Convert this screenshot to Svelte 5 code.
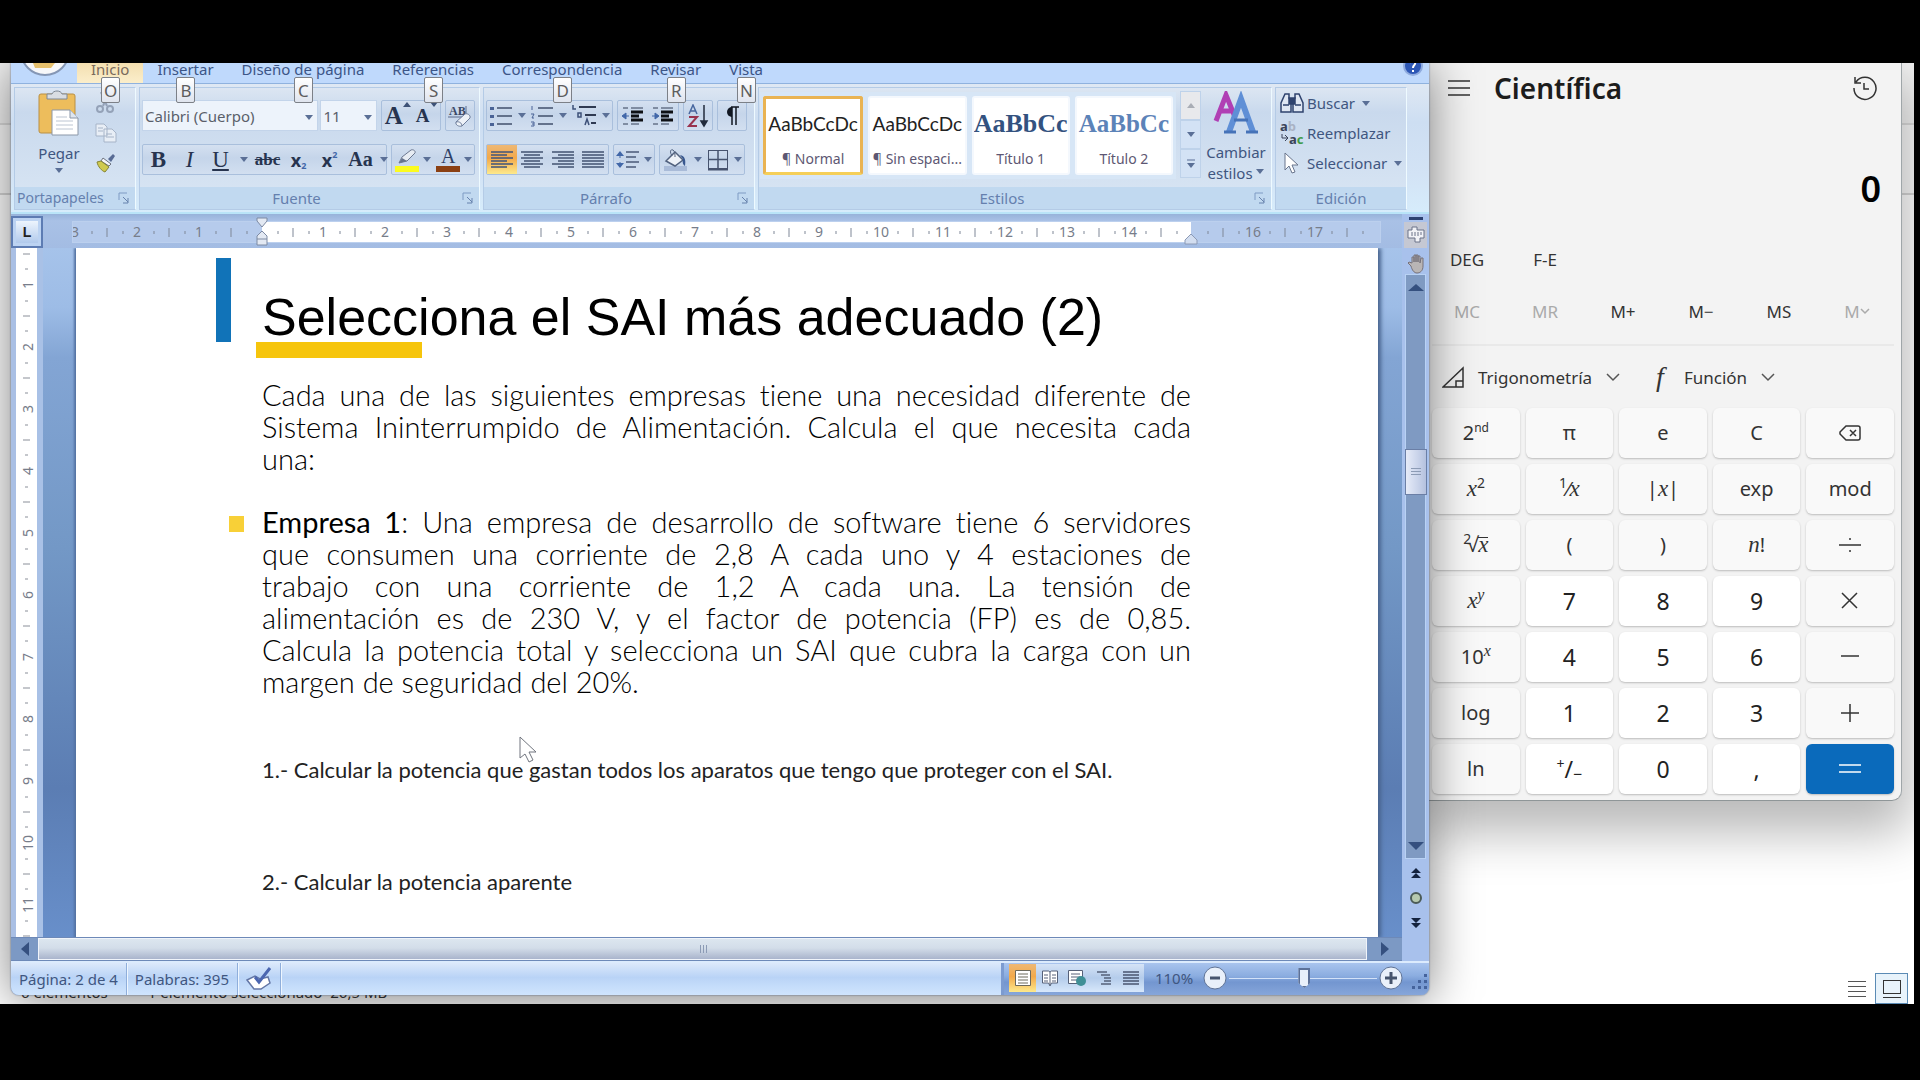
<script>
    let zoom = $state(51);
    let font = $state("Calibri (Cuerpo)");
    let size = $state("11");

    const tabs = [
        {name: "Inicio", key: "O", active: true},
        {name: "Insertar", key: "B"},
        {name: "Diseño de página", key: "C"},
        {name: "Referencias", key: "S"},
        {name: "Correspondencia", key: "D"},
        {name: "Revisar", key: "R"},
        {name: "Vista", key: "N"}
    ];

    const styles = [
        {name: "¶ Normal", sample: "AaBbCcDc", kind: "plain", active: true},
        {name: "¶ Sin espaci...", sample: "AaBbCcDc", kind: "plain"},
        {name: "Título 1", sample: "AaBbCc", kind: "title1"},
        {name: "Título 2", sample: "AaBbCc", kind: "title2"}
    ];

    const unit = 62;
    const hMarks = Array.from({length: 21}, (_, i)=>i - 3);
    const vMarks = Array.from({length: 16}, (_, i)=>i);

    const intro = [
        "Cada una de las siguientes empresas tiene una necesidad diferente de",
        "Sistema Ininterrumpido de Alimentación. Calcula el que necesita cada",
        "una:"
    ];

    const company = [
        "que consumen una corriente de 2,8 A cada uno y 4 estaciones de",
        "trabajo con una corriente de 1,2 A cada una. La tensión de",
        "alimentación es de 230 V, y el factor de potencia (FP) es de 0,85.",
        "Calcula la potencia total y selecciona un SAI que cubra la carga con un",
        "margen de seguridad del 20%."
    ];

    const memory = [
        {label: "MC", off: true},
        {label: "MR", off: true},
        {label: "M+"},
        {label: "M−"},
        {label: "MS"},
        {label: "M", off: true, menu: true}
    ];

    const keys = [
        {label: "2<sup>nd</sup>"},
        {label: "π"},
        {label: "e"},
        {label: "C"},
        {name: "Retroceso", path: "M8 5h12a2 2 0 0 1 2 2v10a2 2 0 0 1-2 2H8l-6-6v-2zM12 9l6 6M18 9l-6 6"},
        {label: "<i>x</i><sup class='big'>2</sup>"},
        {label: "<sup class='big'>1</sup>⁄<i>x</i>"},
        {label: "|<i>x</i>|"},
        {label: "exp"},
        {label: "mod"},
        {label: "<sup class='big root'>2</sup>√<i class='over'>x</i>"},
        {label: "("},
        {label: ")"},
        {label: "<i>n</i>!"},
        {name: "Dividir", path: "M1 12h22M12 5v2M12 17v2"},
        {label: "<i>x</i><sup class='big'><i>y</i></sup>"},
        {label: "7", digit: true},
        {label: "8", digit: true},
        {label: "9", digit: true},
        {name: "Multiplicar", path: "M4 4l15 15M19 4L4 19"},
        {label: "10<sup><i>x</i></sup>"},
        {label: "4", digit: true},
        {label: "5", digit: true},
        {label: "6", digit: true},
        {name: "Restar", path: "M3 11h18"},
        {label: "log"},
        {label: "1", digit: true},
        {label: "2", digit: true},
        {label: "3", digit: true},
        {name: "Sumar", path: "M3 12h18M12 3v18"},
        {label: "ln"},
        {label: "<sup class='big'>+</sup>/<sub>−</sub>", digit: true},
        {label: "0", digit: true},
        {label: ",", digit: true},
        {name: "Igual", path: "M1 8h22M1 15h22", equals: true}
    ];
</script>

{#snippet caret()}
    <svg class="caret" width="8" height="5" viewBox="0 0 8 5"><path d="M0 0h8L4 5z" fill="#5a6f96"/></svg>
{/snippet}

{#snippet launcher()}
    <svg class="launcher" width="12" height="12" viewBox="0 0 12 12" fill="none" stroke="#7f9bc4">
        <path d="M1 8V1h8"/>
        <path d="M5 5l5 5M10 6v5H5" stroke="#6782ad"/>
    </svg>
{/snippet}

{#snippet lines(rows)}
    <svg width="24" height="20" viewBox="0 0 24 20" stroke="#4a5a78" stroke-width="1.6">
        {#each rows as row, i}
            <path d="M{row[0]} {2 + i * 3}H{row[1]}"/>
        {/each}
    </svg>
{/snippet}

<div class="screen">
    <div class="explorer">
        <div class="bands"></div>
        <div class="summary"><span>6 elementos</span><span>1 elemento seleccionado&nbsp; 26,5 MB</span></div>
        <div class="views">
            <button aria-label="Detalles">
                <svg width="20" height="20" viewBox="0 0 20 20" stroke="#555"><path d="M1 2.500h18M1 7.500h18M1 12.500h18M1 17.500h18"/></svg>
            </button>
            <button class="on" aria-label="Iconos grandes">
                <svg width="20" height="20" viewBox="0 0 20 20" fill="none" stroke="#333"><rect x="1.500" y="1.500" width="17" height="13"/><path d="M1 18.500h18"/></svg>
            </button>
        </div>
    </div>

    <section class="word">
        <nav class="tabs">
            <svg class="orb" width="66" height="20" viewBox="0 0 66 20">
                <circle cx="34" cy="-12" r="24" fill="#f7f8fa" stroke="#8597b5" stroke-width="2"/>
                <path d="M22 0h22l-4 5H24z" fill="#e6c06d"/>
            </svg>
            {#each tabs as tab}
                <button class="tab" class:active={tab.active}>{tab.name}<kbd>{tab.key}</kbd></button>
            {/each}
            <button class="help" aria-label="Ayuda">
                <svg width="22" height="14" viewBox="0 0 22 14">
                    <circle cx="11" cy="3" r="9" fill="#2d57b5" stroke="#8fabde" stroke-width="2"/>
                    <path d="M8 0c1-3 6-2 5 1-.5 1.500-2 1.500-2 4M11 7v2" fill="none" stroke="#fff" stroke-width="2"/>
                </svg>
            </button>
        </nav>

        <div class="ribbon">
            <div class="group clipboard">
                <div class="body">
                    <button class="paste">
                        <svg width="42" height="46" viewBox="0 0 42 46">
                            <rect x="1" y="4" width="36" height="39" rx="2" fill="#edbd5c" stroke="#b98f45"/>
                            <path d="M9 9V4h5c1-4 9-4 10 0h5v5z" fill="#d9dde2" stroke="#7e8894"/>
                            <path d="M14 20h18l8 8v17H14z" fill="#fff" stroke="#8b97a8"/>
                            <path d="M32 20v8h8" fill="#dfe6ef" stroke="#8b97a8"/>
                            <path d="M18 27h11M18 31h17M18 35h17M18 39h17" stroke="#bcc5d2"/>
                        </svg>
                        <span>Pegar</span>
                        {@render caret()}
                    </button>
                    <div class="stack">
                        <button aria-label="Cortar">
                            <svg width="20" height="22" viewBox="0 0 20 22" fill="none" stroke="#94a2b8" stroke-width="2">
                                <path d="M6 0l6 14M14 0L8 14"/><circle cx="5" cy="17" r="3"/><circle cx="15" cy="17" r="3"/>
                            </svg>
                        </button>
                        <button aria-label="Copiar">
                            <svg width="22" height="20" viewBox="0 0 22 20" fill="#e8eef6" stroke="#a6b4c8">
                                <path d="M1 1h8l3 3v9H1zM9 6h8l4 4v9H9z"/><path d="M11 11h6M11 14h8M3 5h5M3 8h5"/>
                            </svg>
                        </button>
                        <button aria-label="Copiar formato">
                            <svg width="22" height="22" viewBox="0 0 22 22">
                                <path d="M13 7l5-5 2 2-4 6z" fill="#586b94"/>
                                <path d="M8 6l8 6-2 2-8-5z" fill="#f5f6f8" stroke="#6d7480"/>
                                <path d="M2 10l4-1 8 6-4 5c-3-1-7-5-8-10z" fill="#cfca4e" stroke="#858434"/>
                            </svg>
                        </button>
                    </div>
                </div>
                <footer>Portapapeles{@render launcher()}</footer>
            </div>

            <div class="group fonts">
                <div class="body rows">
                    <div class="row">
                        <div class="combo wide">
                            <select aria-label="Fuente" bind:value={font}><option>Calibri (Cuerpo)</option></select>
                            {@render caret()}
                        </div>
                        <div class="combo">
                            <select aria-label="Tamaño de fuente" bind:value={size}><option>11</option></select>
                            {@render caret()}
                        </div>
                        <div class="tools sizes">
                            <button class="serif large" aria-label="Agrandar fuente">A<svg width="8" height="5" viewBox="0 0 8 5"><path d="M0 5h8L4 0z" fill="#3e5277"/></svg></button>
                            <button class="serif small" aria-label="Encoger fuente">A<svg width="8" height="5" viewBox="0 0 8 5"><path d="M0 0h8L4 5z" fill="#3e5277"/></svg></button>
                        </div>
                        <div class="tools single">
                            <button aria-label="Borrar formato">
                                <svg width="26" height="24" viewBox="0 0 26 24">
                                    <text x="2" y="11" font-size="12" font-weight="bold" font-family="Liberation Serif, serif" fill="#3c4a66">AB</text>
                                    <path d="M1 13h18V2" fill="none" stroke="#5d6d8c"/>
                                    <path d="M9 18l9-8c2-1 6 1 5 4l-8 8c-3 1-7-1-6-4z" fill="#eef2f8" stroke="#6d7d9b"/>
                                    <path d="M9 18c3-1 6 1 6 4" fill="none" stroke="#6d7d9b"/>
                                </svg>
                            </button>
                        </div>
                    </div>
                    <div class="row">
                        <div class="tools letters">
                            <button class="serif"><b>B</b></button>
                            <button class="serif"><i>I</i></button>
                            <button class="serif"><u>U</u></button>
                            {@render caret()}
                            <button class="serif strike"><s>abc</s></button>
                            <button class="script">x<sub>2</sub></button>
                            <button class="script">x<sup>2</sup></button>
                            <button class="serif case">Aa</button>
                            {@render caret()}
                        </div>
                        <div class="tools colors">
                            <button aria-label="Resaltado">
                                <svg width="26" height="24" viewBox="0 0 26 24">
                                    <path d="M5 15l3-6 9-7c2-1 5 1 4 3l-8 8z" fill="#e7ecf3" stroke="#6c7890"/>
                                    <path d="M5 15l3-5 5 3z" fill="#66738c"/>
                                    <rect x="1" y="18" width="24" height="6" fill="#fbfb20"/>
                                </svg>
                            </button>
                            {@render caret()}
                            <button aria-label="Color de fuente">
                                <svg width="26" height="24" viewBox="0 0 26 24">
                                    <text x="6" y="15" font-size="20" font-family="Liberation Serif, serif" fill="#2e3f66">A</text>
                                    <rect x="1" y="18" width="24" height="6" fill="#8b4013"/>
                                </svg>
                            </button>
                            {@render caret()}
                        </div>
                    </div>
                </div>
                <footer>Fuente{@render launcher()}</footer>
            </div>

            <div class="group paragraph">
                <div class="body rows">
                    <div class="row">
                        <div class="tools lists">
                            <button aria-label="Viñetas">
                                <svg width="24" height="22" viewBox="0 0 24 22"><path d="M8 3h15M8 11h15M8 19h15" stroke="#42506c" stroke-width="1.5"/><path d="M1 2h4v3H1zM1 10h4v3H1zM1 18h4v3H1z" fill="#4a6396"/></svg>
                            </button>
                            {@render caret()}
                            <button aria-label="Numeración">
                                <svg width="24" height="22" viewBox="0 0 24 22"><path d="M8 3h15M8 11h15M8 19h15" stroke="#42506c" stroke-width="1.500"/><path d="M2 1v4M1 9h3l-2 4h2M1 17h3v4H1M2 19h2" fill="none" stroke="#4a6396"/></svg>
                            </button>
                            {@render caret()}
                            <button aria-label="Lista multinivel">
                                <svg width="26" height="24" viewBox="0 0 26 24"><path d="M8 3h17M14 11h11M20 19h5" stroke="#2f3a52" stroke-width="2"/><path d="M2 1v4h3M7 9h3v4H7zM14 21l2-6 2 6" fill="none" stroke="#3d5078" stroke-width="1.500"/></svg>
                            </button>
                            {@render caret()}
                        </div>
                        <div class="tools indents">
                            <button aria-label="Reducir sangría">
                                <svg width="22" height="22" viewBox="0 0 22 22"><path d="M1 3h5M9 3h12M1 19h5M9 19h8" stroke="#333f57"/><path d="M9 7h12M9 11h8M9 15h12" stroke="#0e1014" stroke-width="3"/><path d="M0 11l4-3v6zM3 11h4" fill="#4167a8" stroke="#4167a8"/></svg>
                            </button>
                            <button aria-label="Aumentar sangría">
                                <svg width="22" height="22" viewBox="0 0 22 22"><path d="M1 3h5M9 3h12M1 19h5M9 19h8" stroke="#333f57"/><path d="M9 7h12M9 11h8M9 15h12" stroke="#0e1014" stroke-width="3"/><path d="M7 11l-4-3v6zM0 11h4" fill="#4167a8" stroke="#4167a8"/></svg>
                            </button>
                        </div>
                        <div class="tools single">
                            <button aria-label="Ordenar">
                                <svg width="22" height="24" viewBox="0 0 22 24"><path d="M2 10l4-9 4 9M3 7h6" fill="none" stroke="#48679f" stroke-width="1.500"/><path d="M2 13h8L2 22h8" fill="none" stroke="#99344f" stroke-width="2"/><path d="M17 1v19M14 17l3 5 3-5z" fill="#222b3c" stroke="#222b3c" stroke-width="1.500"/></svg>
                            </button>
                        </div>
                        <div class="tools single">
                            <button aria-label="Mostrar todo">
                                <svg width="16" height="20" viewBox="0 0 16 20"><path d="M8 1a5 5 0 0 0 0 10z" fill="#111722"/><path d="M8 1v18M12 1v18M7 1h8" stroke="#111722" stroke-width="1.500"/></svg>
                            </button>
                        </div>
                    </div>
                    <div class="row">
                        <div class="tools aligns">
                            <button class="pressed" aria-label="Alinear a la izquierda">{@render lines([[1, 23], [1, 17], [1, 23], [1, 17], [1, 23], [1, 17]])}</button>
                            <button aria-label="Centrar">{@render lines([[1, 23], [4, 20], [1, 23], [4, 20], [1, 23], [4, 20]])}</button>
                            <button aria-label="Alinear a la derecha">{@render lines([[1, 23], [7, 23], [1, 23], [7, 23], [1, 23], [7, 23]])}</button>
                            <button aria-label="Justificar">{@render lines([[1, 23], [1, 23], [1, 23], [1, 23], [1, 23], [1, 23]])}</button>
                        </div>
                        <div class="tools spacing">
                            <button aria-label="Interlineado">
                                <svg width="24" height="20" viewBox="0 0 24 20"><path d="M10 2h13M10 7h10M10 12h13M10 17h10" stroke="#4a5a78" stroke-width="1.500"/><path d="M4 3v14" stroke="#4167a8" stroke-dasharray="5 4"/><path d="M0 6l4-5 4 5zM0 13l4 5 4-5z" fill="#4167a8"/></svg>
                            </button>
                            {@render caret()}
                        </div>
                        <div class="tools fills">
                            <button aria-label="Sombreado">
                                <svg width="26" height="24" viewBox="0 0 26 24"><rect x="1" y="18" width="23" height="5" fill="#a9bbd8"/><path d="M3 13l9-9 8 8-8 6z" fill="#eef2f8" stroke="#52627f" stroke-width="1.500"/><path d="M9 8c-3-5-1-7 1-6s2 5 2 7" fill="none" stroke="#52627f"/><path d="M17 7c5 1 6 5 5 11-2-1-3-4-2-7z" fill="#39588f"/></svg>
                            </button>
                            {@render caret()}
                            <button aria-label="Bordes">
                                <svg width="22" height="22" viewBox="0 0 22 22" fill="none" stroke="#46536e"><rect x="1.500" y="1.500" width="19" height="18"/><path d="M11 1v19M1 10.500h20" stroke-width="1.500"/><path d="M1 20.500h20" stroke-width="2"/></svg>
                            </button>
                            {@render caret()}
                        </div>
                    </div>
                </div>
                <footer>Párrafo{@render launcher()}</footer>
            </div>

            <div class="group gallery">
                <div class="body">
                    <div class="cards">
                        {#each styles as style}
                            <button class="card" class:active={style.active}>
                                <span class="sample {style.kind}">{style.sample}</span>
                                <span class="label">{style.name}</span>
                            </button>
                        {/each}
                    </div>
                    <div class="pager">
                        <button class="dim" aria-label="Anterior"><svg width="8" height="5" viewBox="0 0 8 5"><path d="M0 5h8L4 0z" fill="#a9adb5"/></svg></button>
                        <button aria-label="Siguiente">{@render caret()}</button>
                        <button aria-label="Más"><svg width="8" height="9" viewBox="0 0 8 9"><path d="M0 1h8" stroke="#5a6f96"/><path d="M0 4h8L4 9z" fill="#5a6f96"/></svg></button>
                    </div>
                    <button class="change">
                        <svg width="46" height="44" viewBox="0 0 46 44" fill="none">
                            <path d="M3 30L13 4l9 22M7 20h12" stroke="#b03fb4" stroke-width="5"/>
                            <path d="M16 41L28 8l12 33" stroke="#5f8fd6" stroke-width="6"/>
                            <path d="M21 29h14M11 41h12M33 41h12" stroke="#4673b8" stroke-width="3"/>
                        </svg>
                        <span>Cambiar</span>
                        <span>estilos {@render caret()}</span>
                    </button>
                </div>
                <footer>Estilos{@render launcher()}</footer>
            </div>

            <div class="group editing">
                <div class="body">
                    <button>
                        <svg width="24" height="20" viewBox="0 0 24 20" fill="#dfe7f3" stroke="#2f436e" stroke-width="1.500"><path d="M5 1h4v4l2 3v11H1v-9zM15 1h4l4 9v9H13V8l2-3z"/><path d="M9 5h6v6H9z" fill="#2f436e"/><path d="M3 12h6M15 12h6"/></svg>
                        Buscar {@render caret()}
                    </button>
                    <button>
                        <svg width="24" height="24" viewBox="0 0 24 24" font-family="Noto Sans, sans-serif" font-weight="bold" font-size="13">
                            <text x="0" y="10" fill="#3a4358">a<tspan fill="#a9b2c4">b</tspan></text>
                            <text x="9" y="23" fill="#3a4358">a<tspan fill="#3e9a48">c</tspan></text>
                            <path d="M2 13v4h5M5 14l3 3-3 3" fill="none" stroke="#3a4358"/>
                        </svg>
                        Reemplazar
                    </button>
                    <button>
                        <svg width="24" height="22" viewBox="0 0 24 22"><path d="M5 1v17l4-4 3 7 3-1-3-7h6z" fill="#fff" stroke="#68748c"/></svg>
                        Seleccionar {@render caret()}
                    </button>
                </div>
                <footer>Edición</footer>
            </div>
        </div>

        <div class="work">
            <div class="main">
                <div class="rulerRow">
                    <button class="corner" aria-label="Tabulación izquierda">L</button>
                    <div class="ruler">
                        <svg width="100%" height="32">
                            <rect x="189" y="6" width="929" height="20" fill="#fff"/>
                            {#each hMarks as n}
                                {#if n !== 0 && n !== 15}
                                    <text x={188 + n * unit} y="21" text-anchor="middle">{Math.abs(n)}</text>
                                {/if}
                                <path d="M{205 + n * unit} 15v3M{220 + n * unit} 12v9M{236 + n * unit} 15v3" stroke="#7f8797"/>
                            {/each}
                            <path d="M184 2h10v3l-5 6-5-6zM189 15l5 5v9h-10v-9zM184 23h10" fill="#e3e9f3" stroke="#7d8aa3"/>
                            <path d="M1118 18l6 6v4h-12v-4z" fill="#d3def0" stroke="#8c9ab5"/>
                        </svg>
                    </div>
                </div>

                <div class="docRow">
                    <svg class="vruler" width="21" height="690">
                        {#each vMarks as n}
                            {#if n > 0}
                                <text transform="translate(17 {n * unit - 25}) rotate(-90)" text-anchor="middle">{n}</text>
                            {/if}
                            <path d="M9 {n * unit - 9}h3M7 {n * unit + 6}h7M9 {n * unit + 21}h3" stroke="#8a8f99"/>
                        {/each}
                    </svg>
                    <article class="page">
                        <h1>Selecciona el SAI más adecuado (2)</h1>
                        <p class="gothic">
                            {#each intro as line}<span>{line}</span>{/each}
                        </p>
                        <p class="gothic item">
                            <span><b>Empresa 1</b>: Una empresa de desarrollo de software tiene 6 servidores</span>
                            {#each company as line}<span>{line}</span>{/each}
                        </p>
                        <p class="step">1.- Calcular la potencia que gastan todos los aparatos que tengo que proteger con el SAI.</p>
                        <p class="step">2.- Calcular la potencia aparente</p>
                        <svg class="pointer" width="20" height="28" viewBox="0 0 20 28"><path d="M1 1v21l5-4 4 8 4-2-4-8h7z" fill="#fff" stroke="#70757e"/></svg>
                    </article>
                </div>

                <div class="hscroll">
                    <button aria-label="Desplazar a la izquierda"><svg width="8" height="14" viewBox="0 0 8 14"><path d="M8 0v14L0 7z" fill="#35507f"/></svg></button>
                    <div class="thumb"><svg width="8" height="8" viewBox="0 0 8 8" stroke="#8c9bb5"><path d="M1.500 0v8M4.500 0v8M7.500 0v8"/></svg></div>
                    <button aria-label="Desplazar a la derecha"><svg width="8" height="14" viewBox="0 0 8 14"><path d="M0 0v14l8-7z" fill="#35507f"/></svg></button>
                </div>
            </div>

            <div class="vscroll">
                <div class="split"></div>
                <button class="toggle" aria-label="Regla">
                    <svg width="20" height="18" viewBox="0 0 20 18" fill="#f1f2f7" stroke="#6b7288"><path d="M2 4h4V1h5v3h7v8h-4v4H9v-4H2z"/><path d="M6 6v4M9 6v4M12 6v4M15 6v3"/></svg>
                </button>
                <svg class="hand" width="18" height="20" viewBox="0 0 18 20"><path d="M4 12L1 9l1-1 3 1V3h2v5V1h2v7V1h2v7V2h2v7l1-5h2v8c0 5-3 7-6 7s-5-3-6-7z" fill="#b9b5b5" stroke="#77727a"/></svg>
                <div class="track">
                    <svg width="16" height="8" viewBox="0 0 16 8"><path d="M0 7h16L8 0z" fill="#35507f"/></svg>
                    <div class="thumb"><svg width="10" height="9" viewBox="0 0 10 9" stroke="#8c9bb5"><path d="M0 .5h10M0 3.500h10M0 6.500h10"/></svg></div>
                    <svg width="16" height="8" viewBox="0 0 16 8"><path d="M0 0h16L8 8z" fill="#35507f"/></svg>
                </div>
                <button aria-label="Página anterior"><svg width="10" height="12" viewBox="0 0 10 12"><path d="M0 6l5-5 5 5zM0 11l5-5 5 5z" fill="#14233f"/></svg></button>
                <button aria-label="Seleccionar objeto"><svg width="12" height="12" viewBox="0 0 12 12"><circle cx="6" cy="6" r="5" fill="#b6c9ae" stroke="#4b5b57" stroke-width="2"/></svg></button>
                <button aria-label="Página siguiente"><svg width="10" height="12" viewBox="0 0 10 12"><path d="M0 1l5 5 5-5zM0 6l5 5 5-5z" fill="#14233f"/></svg></button>
            </div>
        </div>

        <div class="status">
            <div class="info">
                <button>Página: 2 de 4</button>
                <button>Palabras: 395</button>
                <button aria-label="Revisión ortográfica">
                    <svg width="26" height="24" viewBox="0 0 26 24"><path d="M1 13l8-4 5 3 8-2 2 6-9 6H8z" fill="#fff" stroke="#6477a6" stroke-width="1.500"/><path d="M9 10l4 5L24 1" fill="none" stroke="#4b66b0" stroke-width="3"/></svg>
                </button>
            </div>
            <div class="modes">
                <button class="pressed" aria-label="Diseño de impresión"><svg width="18" height="18" viewBox="0 0 18 18" fill="#fff" stroke="#6d6a5c"><path d="M1.500 1.500h15v15h-15zM4 5h10M4 8h10M4 11h10M4 14h10"/></svg></button>
                <button aria-label="Lectura"><svg width="18" height="18" viewBox="0 0 18 18" fill="#fff" stroke="#566179"><path d="M1.500 2h6l1.500 1 1.500-1h6v12h-6L9 17l-1.500-3h-6zM9 3v13M3 6h4M3 9h4M11 6h4M11 9h4M3 12h4M11 12h4"/></svg></button>
                <button aria-label="Diseño web"><svg width="20" height="18" viewBox="0 0 20 18"><path d="M1.500 1.500h14v13h-14zM4 5h9M4 8h9M4 11h6" fill="#fff" stroke="#566179"/><circle cx="14" cy="12" r="5" fill="#3f8f96"/></svg></button>
                <button aria-label="Esquema"><svg width="18" height="18" viewBox="0 0 18 18" stroke="#566179" stroke-width="1.500"><path d="M2 3h10M6 6h9M9 9h7M9 12h7M6 15h10"/></svg></button>
                <button aria-label="Borrador"><svg width="18" height="18" viewBox="0 0 18 18" stroke="#4a5570" stroke-width="1.500"><path d="M1 3h16M1 6h16M1 9h16M1 12h16M1 15h16"/></svg></button>
            </div>
            <div class="zoom">
                <button class="percent">110%</button>
                <button class="round" aria-label="Alejar"><svg width="24" height="24" viewBox="0 0 24 24"><circle cx="12" cy="12" r="11" fill="#e9f0fa" stroke="#5f7396"/><path d="M7 12h10" stroke="#46546d" stroke-width="3"/></svg></button>
                <input type="range" aria-label="Zoom" min="0" max="100" bind:value={zoom}>
                <button class="round" aria-label="Acercar"><svg width="24" height="24" viewBox="0 0 24 24"><circle cx="12" cy="12" r="11" fill="#e9f0fa" stroke="#5f7396"/><path d="M6 12h12M12 6v12" stroke="#46546d" stroke-width="3"/></svg></button>
                <svg width="18" height="18" viewBox="0 0 18 18" fill="#45639c"><path d="M14 1h3v3h-3zM14 7h3v3h-3zM14 13h3v3h-3zM8 7h3v3H8zM8 13h3v3H8zM2 13h3v3H2z"/></svg>
            </div>
        </div>
    </section>

    <section class="calc">
        <header>
            <button aria-label="Abrir navegación">
                <svg width="22" height="18" viewBox="0 0 22 18" stroke="#333" stroke-width="1.500"><path d="M0 2h22M0 9h22M0 16h22"/></svg>
            </button>
            <h2>Científica</h2>
            <button class="history" aria-label="Historial">
                <svg width="26" height="26" viewBox="0 0 26 26" fill="none" stroke="#333" stroke-width="1.500"><path d="M2 13a11 11 0 1 0 2-6M3 2v6h6M12 8v6h5"/></svg>
            </button>
        </header>
        <output>0</output>
        <div class="modesRow"><button>DEG</button><button>F-E</button></div>
        <div class="memory">
            {#each memory as item}
                <button disabled={item.off}>{item.label}{#if item.menu}<svg width="10" height="7" viewBox="0 0 10 7" fill="none" stroke="#aaa" stroke-width="1.500"><path d="M1 1l4 4 4-4"/></svg>{/if}</button>
            {/each}
        </div>
        <div class="functions">
            <button>
                <svg width="22" height="22" viewBox="0 0 22 22" fill="none" stroke="#333" stroke-width="1.500"><path d="M1 21L21 2v19zM14 21v-6h7"/></svg>
                Trigonometría
                <svg width="14" height="9" viewBox="0 0 14 9" fill="none" stroke="#555" stroke-width="1.500"><path d="M1 1l6 6 6-6"/></svg>
            </button>
            <button>
                <i>f</i>
                Función
                <svg width="14" height="9" viewBox="0 0 14 9" fill="none" stroke="#555" stroke-width="1.500"><path d="M1 1l6 6 6-6"/></svg>
            </button>
        </div>
        <div class="keys">
            {#each keys as key}
                <button class="key" class:digit={key.digit} class:equals={key.equals} aria-label={key.name}>
                    {#if key.path}
                        <svg width="24" height="24" viewBox="0 0 24 24" fill="none" stroke="currentColor" stroke-width="1.500"><path d={key.path}/></svg>
                    {:else}
                        <span>{@html key.label}</span>
                    {/if}
                </button>
            {/each}
        </div>
    </section>
</div>

<style>
    :global(body){
        background: #000;
    }

    :global(#app){
        height: 100vh;
        box-sizing: border-box;
        padding: 63px 6px 76px 0;
    }

    *{
        box-sizing: border-box;
    }

    button{
        display: flex;
        align-items: center;
        justify-content: center;
        margin: 0;
        padding: 0;
        border: none;
        background: none;
        color: inherit;
        font: inherit;
    }

    svg{
        flex: none;
    }

    .screen{
        position: relative;
        display: flex;
        align-items: flex-start;
        height: 100%;
        overflow: hidden;
        padding: 0 12px 0 11px;
        background: #fff;
        font-family: "Noto Sans", "Open Sans", sans-serif;
        font-size: 15px;
        color: #3f5680;
    }

    /* file explorer behind both windows */
    .explorer{
        position: absolute;
        inset: 0;
    }

    .bands{
        height: 132px;
        border-bottom: 2px solid #d6d6d6;
        background: linear-gradient(#f3f3f3 60px, #dcdcdc 60px, #dcdcdc 62px, #fafafa 62px);
    }

    .summary{
        position: absolute;
        left: 21px;
        bottom: 2px;
        display: flex;
        gap: 40px;
        color: #333;
        line-height: 20px;
    }

    .views{
        position: absolute;
        right: 6px;
        bottom: 0;
        display: flex;
        gap: 2px;
    }

    .views button{
        width: 33px;
        height: 31px;
    }

    .views .on{
        border: 1px solid #5b8bb5;
        background: #e8f3fb;
    }

    .word{
        position: relative;
        z-index: 2;
        display: flex;
        flex-direction: column;
        flex: 1;
        min-width: 0;
        height: calc(100% - 9px);
        border-radius: 0 0 8px 8px;
        background: #a9c1e6;
        box-shadow: 0 4px 48px rgba(0, 0, 0, 0.5), 0 0 2px #5d7398;
    }

    .tabs{
        display: flex;
        height: 21px;
        border-bottom: 1px solid #8fb2de;
        background: #bfd9fc;
    }

    .tab{
        position: relative;
        align-items: flex-start;
        padding: 0 14px;
        color: #3c5587;
        line-height: 12px;
        white-space: nowrap;
    }

    .tab.active{
        background: linear-gradient(#f3dfb0, #fbeecb);
        color: #7a6a5c;
    }

    kbd{
        position: absolute;
        z-index: 1;
        top: 14px;
        left: calc(50% - 9px);
        width: 19px;
        height: 26px;
        border: 1px solid #7c8087;
        border-radius: 2px;
        background: linear-gradient(#fff, #dfe4ee);
        color: #5d5d5d;
        font: 17px/25px "Noto Sans", sans-serif;
        text-align: center;
    }

    .help{
        align-items: flex-start;
        margin: 0 5px 0 auto;
    }

    .ribbon{
        display: flex;
        gap: 3px;
        height: 130px;
        padding: 3px 22px 2px 3px;
        border-bottom: 2px solid #b9e4f8;
        background: linear-gradient(#dfe8f3, #cddef2 30%, #d3e3f5 70%, #d6ecfb);
    }

    .group{
        display: flex;
        flex-direction: column;
        border: 1px solid #b4cbe6;
        border-right-color: #eefaff;
        background: linear-gradient(#dce6f2, #c9d9ed 20%, #d9e6f4);
    }

    .body{
        display: flex;
        flex: 1;
    }

    .group footer{
        display: flex;
        align-items: center;
        justify-content: center;
        height: 22px;
        background: #c1d9f0;
        color: #6580ae;
        line-height: 20px;
    }

    .launcher{
        margin-right: 5px;
    }

    .fonts .launcher, .paragraph .launcher, .gallery .launcher{
        position: absolute;
        right: 0;
    }

    .fonts footer, .paragraph footer, .gallery footer{
        position: relative;
        padding-right: 26px;
    }

    .clipboard{
        width: 122px;
    }

    .clipboard footer{
        justify-content: space-between;
        padding-left: 2px;
        font-size: 14px;
    }

    .paste{
        flex-direction: column;
        justify-content: flex-start;
        width: 88px;
        padding-top: 2px;
        gap: 6px;
        line-height: 22px;
    }

    .paste .caret{
        margin-top: -2px;
    }

    .stack{
        display: flex;
        flex-direction: column;
        align-items: flex-start;
        gap: 8px;
        padding-top: 4px;
        margin-left: -8px;
    }

    .stack button{
        height: 22px;
    }

    .fonts{
        width: 341px;
    }

    .rows{
        flex-direction: column;
        gap: 13px;
        padding: 12px 4px 0 2px;
    }

    .row{
        display: flex;
        gap: 4px;
        height: 31px;
    }

    .tools{
        display: flex;
        align-items: center;
        justify-content: space-around;
        border: 1px solid #a9bfdc;
        border-radius: 2px;
        background: linear-gradient(#d4e0f0, #c5d5ea 45%, #d2dff0);
        color: #27344f;
    }

    .combo{
        position: relative;
        width: 57px;
        border: 1px solid #c3d4ea;
        background: #edf3fb;
    }

    .combo.wide{
        width: 177px;
        margin-right: -2px;
    }

    .combo select{
        width: 100%;
        height: 100%;
        padding: 0 2px;
        border: none;
        appearance: none;
        background: none;
        color: #5a5f6a;
        font: 15px "Noto Sans", sans-serif;
    }

    .combo .caret{
        position: absolute;
        right: 4px;
        top: 14px;
        pointer-events: none;
    }

    .sizes{
        width: 60px;
    }

    .single{
        width: 30px;
    }

    .serif{
        font-family: "Liberation Serif", serif;
        font-size: 23px;
    }

    .large, .small{
        align-items: flex-start;
        font-weight: bold;
        font-size: 25px;
        line-height: 28px;
    }

    .small{
        font-size: 19px;
    }

    .letters{
        justify-content: flex-start;
        width: 245px;
    }

    .letters button{
        flex: none;
        width: 31px;
    }

    .letters .caret{
        margin: 0 4px;
    }

    .letters .strike{
        font-size: 17px;
        font-weight: bold;
    }

    .letters .case{
        font-size: 20px;
        font-weight: bold;
    }

    .script{
        font-size: 18px;
        font-weight: bold;
    }

    .script sub, .script sup{
        color: #4167a8;
        font-size: 9px;
    }

    .script sub{
        align-self: flex-end;
    }

    .script sup{
        align-self: flex-start;
    }

    .colors{
        flex: 1;
    }

    .paragraph{
        width: 272px;
    }

    .lists{
        width: 127px;
    }

    .indents{
        width: 62px;
    }

    .aligns{
        width: 123px;
    }

    .aligns button{
        flex: 1;
        height: 100%;
    }

    .pressed{
        background: linear-gradient(#eeb875, #f3a94a 45%, #fde98c);
    }

    .spacing{
        width: 42px;
    }

    .fills{
        width: 86px;
    }

    .gallery{
        flex: 1;
        min-width: 0;
    }

    .cards{
        display: flex;
        flex: 1;
        gap: 5px;
        min-width: 0;
        margin: 4px 4px 8px 1px;
        padding: 4px 3px;
        background: #d7e6f6;
    }

    .card{
        flex: 1;
        flex-direction: column;
        justify-content: flex-start;
        gap: 11px;
        min-width: 0;
        overflow: hidden;
        border: 2px solid #f4f8fd;
        border-radius: 3px;
        background: #fff;
        color: #5d5773;
        font-size: 14px;
        white-space: nowrap;
    }

    .card.active{
        border: 3px solid #e9b352;
        border-bottom-color: #f5cf58;
    }

    .sample{
        height: 30px;
        margin-top: 9px;
        color: #222;
        font-family: Lato, sans-serif;
        font-size: 19px;
        line-height: 34px;
    }

    .active .sample{
        margin-top: 8px;
    }

    .title1, .title2{
        color: #33527f;
        font-family: "Liberation Serif", serif;
        font-weight: bold;
        font-size: 26px;
    }

    .title2{
        color: #5c83b8;
        font-size: 25px;
    }

    .label{
        line-height: 22px;
    }

    .pager{
        display: flex;
        flex-direction: column;
        width: 21px;
        margin: 3px 0 9px;
    }

    .pager button{
        flex: 1;
        border: 1px solid #bed2ea;
        background: #d3e2f5;
    }

    .pager .dim{
        background: #e8e9ec;
    }

    .change{
        flex-direction: column;
        justify-content: flex-start;
        width: 70px;
        padding-top: 3px;
        line-height: 21px;
    }

    .change svg:first-child{
        margin-bottom: 7px;
    }

    .change .caret, .editing .caret{
        vertical-align: middle;
        margin-left: 4px;
    }

    .change .caret{
        margin-left: 0;
        margin-bottom: 0;
    }

    .editing{
        width: 132px;
    }

    .editing .body{
        flex-direction: column;
        align-items: flex-start;
        gap: 6px;
        padding: 3px 4px;
    }

    .editing .body button{
        height: 24px;
        gap: 3px;
        white-space: nowrap;
    }

    .work{
        display: flex;
        flex: 1;
        min-height: 0;
        background: #a9c1e8;
    }

    .main{
        display: flex;
        flex-direction: column;
        flex: 1;
        min-width: 0;
    }

    .rulerRow{
        display: flex;
        height: 34px;
        padding-right: 22px;
        background: linear-gradient(#97b3da, #a9c1e6 20%, #a3bce3);
    }

    .corner{
        width: 32px;
        margin: 2px 30px 0 0;
        border: 2px solid #5d7cb3;
        outline: 3px solid #bcd3f2;
        outline-offset: -5px;
        background: linear-gradient(#f5faff, #a9c4ea);
        color: #222;
        font: bold 14px "Liberation Sans", sans-serif;
    }

    .ruler{
        flex: 1;
        height: 20px;
        margin-top: 8px;
        background: #b6cbec;
        box-shadow: 0 0 0 1px #bcd0ee;
    }

    .ruler svg{
        display: block;
        margin-top: -6px;
    }

    .ruler text, .vruler text{
        fill: #777d8a;
        font-size: 14px;
    }

    .docRow{
        display: flex;
        flex: 1;
        min-height: 0;
        overflow: hidden;
        background: linear-gradient(#a6c3ea, #9dbce6 60px, #83a5d4 110px, #7398c6 300px, #5b7db3 540px, #688fca);
    }

    .vruler{
        box-sizing: content-box;
        border-left: 5px solid #a9bfe4;
        border-right: 6px solid #a9c1e6;
        background: #fff;
    }

    .page{
        position: relative;
        flex: 1;
        height: 690px;
        margin: 0 24px 0 33px;
        padding: 39px 187px 0 186px;
        background: #fff;
        box-shadow: 3px 0 4px #48648f, -2px 0 2px #5575a5;
        color: #000;
        font-variant-ligatures: none;
    }

    h1{
        position: relative;
        margin: 0 0 32px;
        font: 52px/60px "Liberation Sans", Arial, sans-serif;
        white-space: nowrap;
    }

    h1::before{
        content: "";
        position: absolute;
        top: -29px;
        left: -46px;
        width: 15px;
        height: 84px;
        background: #1173b8;
    }

    h1::after{
        content: "";
        position: absolute;
        top: 55px;
        left: -6px;
        width: 166px;
        height: 16px;
        background: #f6c50c;
    }

    .gothic{
        margin: 0 0 31px;
        font-family: Lato, sans-serif;
        font-size: 29px;
        font-weight: 300;
        line-height: 32px;
    }

    .gothic span{
        display: block;
        white-space: nowrap;
        text-align-last: justify;
    }

    .gothic span:last-child{
        text-align-last: left;
    }

    .item{
        position: relative;
        margin-bottom: 56px;
    }

    .item::before{
        content: "";
        position: absolute;
        top: 10px;
        left: -33px;
        width: 15px;
        height: 16px;
        background: #f8d037;
    }

    .step{
        margin: 0 0 80px;
        color: #222;
        font-family: Lato, sans-serif;
        font-size: 22px;
        line-height: 32px;
        white-space: nowrap;
    }

    .pointer{
        position: absolute;
        left: 443px;
        top: 488px;
    }

    .hscroll{
        display: flex;
        height: 24px;
        border: 1px solid #6d89b8;
        border-width: 1px 0;
        background: #7c99c4;
    }

    .hscroll button{
        width: 27px;
    }

    .hscroll button:last-child{
        width: 35px;
    }

    .hscroll .thumb{
        display: flex;
        align-items: center;
        justify-content: center;
        flex: 1;
        border: 1px solid #f0f4fa;
        background: linear-gradient(#dce6ef, #d3dde9 45%, #a9b4cc);
    }

    .vscroll{
        display: flex;
        flex-direction: column;
        align-items: center;
        width: 27px;
        padding: 3px 2px 26px;
        background: #a8c1ec;
    }

    .split{
        width: 14px;
        height: 3px;
        background: #2c4070;
    }

    .toggle{
        width: 23px;
        height: 26px;
        margin: 2px 0 6px;
        background: #c5c8d3;
    }

    .track{
        display: flex;
        flex-direction: column;
        align-items: center;
        flex: 1;
        width: 21px;
        margin: 0 0 1px;
        padding: 9px 0 8px;
        border: 1px solid #b9d2f4;
        background: #7f9ac2;
    }

    .track .thumb{
        display: flex;
        align-items: center;
        justify-content: center;
        width: 22px;
        height: 46px;
        margin: 157px 0 auto;
        border: 1px solid #6b7fa6;
        background: linear-gradient(90deg, #e6ebf8, #c9d3ea 60%, #b4c1de);
    }

    .vscroll > button:not(.toggle){
        height: 25px;
    }

    .status{
        display: flex;
        align-items: stretch;
        height: 34px;
        border-top: 2px solid #dcebfd;
        border-radius: 0 0 8px 8px;
        background: linear-gradient(#a9c4ee, #8bade0 40%, #7396d0 60%, #86a6da);
        overflow: hidden;
    }

    .info{
        display: flex;
        flex: 1;
        border-right: 3px solid #7c9bd0;
        background: linear-gradient(#dce9fb, #b9d3f6 45%, #c4dcfa 70%, #cfe4fd);
    }

    .info button{
        padding: 0 8px;
        border-right: 1px solid #8faedb;
        box-shadow: 1px 0 #eef6ff;
    }

    .modes{
        display: flex;
        margin: 1px 10px 3px 5px;
        background: linear-gradient(#d5e3f6, #b4cceb 50%, #d8e8fb);
    }

    .modes button{
        width: 27px;
    }

    .zoom{
        display: flex;
        align-items: center;
        padding: 0 1px 2px 0;
    }

    .percent{
        width: 40px;
        margin-right: 9px;
    }

    input[type="range"]{
        width: 148px;
        height: 22px;
        margin: 0 2px;
        appearance: none;
        background: linear-gradient(#d3e2f8, #d3e2f8) center / 100% 1px no-repeat;
    }

    input[type="range"]::-webkit-slider-thumb{
        appearance: none;
        width: 12px;
        height: 20px;
        border: 2px solid #5c7199;
        background: #e8f0fb;
        clip-path: polygon(0 0, 100% 0, 100% 75%, 50% 100%, 0 75%);
    }

    .zoom > svg{
        margin: 8px 0 0 7px;
    }

    /* calculator */
    .calc{
        position: relative;
        z-index: 1;
        width: 473px;
        padding: 0 7px 6px 3px;
        border-right: 1px solid #9fa6a9;
        border-bottom: 1px solid #8f9698;
        border-radius: 0 0 10px 0;
        background: #f3f3f3;
        box-shadow: 0 24px 50px 8px rgba(0, 0, 0, 0.28);
        color: #333;
        font-size: 18px;
    }

    header{
        display: flex;
        align-items: center;
        height: 50px;
        padding: 0 16px;
    }

    h2{
        margin: 0 auto 0 24px;
        color: #1c1c1c;
        font: 600 28px/36px "Noto Sans", "Open Sans", sans-serif;
    }

    output{
        display: block;
        padding: 48px 13px 0;
        color: #000;
        font-size: 36px;
        font-weight: 600;
        line-height: 56px;
        text-align: right;
    }

    .modesRow, .memory{
        display: flex;
        height: 52px;
    }

    .modesRow{
        margin-top: 16px;
    }

    .modesRow button, .memory button{
        flex: none;
        width: 78px;
        padding-right: 8px;
        font-size: 17px;
    }

    .memory button:disabled{
        color: #aaa;
    }

    .functions{
        display: flex;
        gap: 36px;
        height: 64px;
        margin-top: 7px;
        padding-left: 10px;
        border-top: 2px solid #e9e9e9;
        font-size: 17px;
    }

    .functions button{
        gap: 14px;
    }

    .functions i{
        margin-right: 6px;
        font: italic 28px "Liberation Serif", serif;
    }

    .keys{
        display: grid;
        grid-template-columns: repeat(5, 1fr);
        grid-auto-rows: 50px;
        gap: 6px;
    }

    .key{
        border-radius: 6px;
        background: #f9f9f9;
        box-shadow: 0 1px 2px #bcbcbc;
        font-size: 20px;
        line-height: 24px;
    }

    .key.digit{
        background: #fff;
        color: #222;
        font-size: 23px;
    }

    .key.equals{
        background: #0a6abb;
        color: #fff;
    }

    .key :global(i){
        font-family: "Liberation Serif", serif;
        font-size: 23px;
    }

    .key :global(sup), .key :global(sub){
        font-size: 12px;
        line-height: 0;
    }

    .key :global(sub){
        font-size: 16px;
        vertical-align: -2px;
    }

    .key :global(sup.big){
        font-size: 14px;
    }

    .key :global(sup.root){
        margin-right: -4px;
    }

    .key :global(sup i){
        font-size: 16px;
    }

    .key :global(.over){
        border-top: 1px solid #333;
        line-height: 14px;
        display: inline-block;
    }
</style>
